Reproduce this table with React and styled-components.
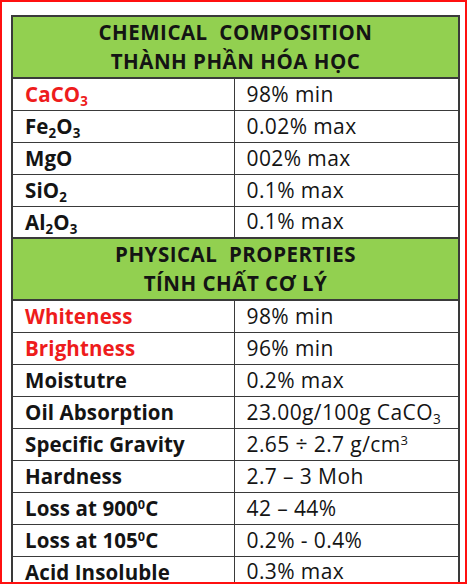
import React from "react";
import styled, { createGlobalStyle } from "styled-components";

const Global = createGlobalStyle`
  html, body { margin: 0; padding: 0; background: #fff; }
  body { font-family: "Open Sans", Lato, sans-serif; }
`;

const Frame = styled.div`
  width: 467px;
  height: 584px;
  box-sizing: border-box;
  border: 2px solid #ff1010;
  padding: 13px 0 0 9px;
  overflow: hidden;
  background: #fff;
`;

const Table = styled.table`
  width: 449px;
  border-collapse: collapse;
  table-layout: fixed;
  border: 2px solid #3a3a3a;
  color: #141414;
`;

const HeadCell = styled.th`
  background: #92d050;
  height: 60px;
  padding: 0;
  font-weight: 700;
  font-size: 20.5px;
  text-align: center;
  line-height: 29px;
  letter-spacing: 0.5px;
  border: 2px solid #3a3a3a;
`;

const Row = styled.tr`
  height: 32px;
`;

const Name = styled.td`
  padding: 0 0 0 12px;
  font-weight: 700;
  font-size: 20.5px;
  letter-spacing: 0.1px;
  color: ${(p) => (p.$red ? "#ee1c1c" : "#141414")};
  border: 1.5px solid #3a3a3a;
  white-space: nowrap;
  line-height: 1;
`;

const Value = styled.td`
  padding: 0 0 0 12px;
  font-weight: 400;
  font-size: 21px;
  letter-spacing: 0.4px;
  border: 1.5px solid #3a3a3a;
  white-space: nowrap;
  line-height: 1;
`;

const Sub = styled.sub`
  font-size: 0.65em;
  vertical-align: -0.3em;
  line-height: 0;
`;

const Sup = styled.sup`
  font-size: 0.62em;
  vertical-align: 0.55em;
  line-height: 0;
`;

const chemical = [
  { name: <>CaCO<Sub>3</Sub></>, value: "98% min", red: true },
  { name: <>Fe<Sub>2</Sub>O<Sub>3</Sub></>, value: "0.02% max" },
  { name: "MgO", value: "002% max" },
  { name: <>SiO<Sub>2</Sub></>, value: "0.1% max" },
  { name: <>Al<Sub>2</Sub>O<Sub>3</Sub></>, value: "0.1% max" },
];

const physical = [
  { name: "Whiteness", value: "98% min", red: true },
  { name: "Brightness", value: "96% min", red: true },
  { name: "Moistutre", value: "0.2% max" },
  { name: "Oil Absorption", value: <>23.00g/100g CaCO<Sub>3</Sub></> },
  { name: "Specific Gravity", value: <>2.65 ÷ 2.7 g/cm<Sup>3</Sup></> },
  { name: "Hardness", value: "2.7 – 3 Moh" },
  { name: <>Loss at 900<Sup>0</Sup>C</>, value: "42 – 44%" },
  { name: <>Loss at 105<Sup>0</Sup>C</>, value: "0.2% - 0.4%" },
  { name: "Acid Insoluble", value: "0.3% max" },
];

const Rows = ({ items }) =>
  items.map((it, i) => (
    <Row key={i}>
      <Name $red={it.red}>{it.name}</Name>
      <Value>{it.value}</Value>
    </Row>
  ));

export default function App() {
  return (
    <>
      <Global />
      <Frame>
        <Table>
          <colgroup>
            <col style={{ width: 222 }} />
            <col />
          </colgroup>
          <tbody>
            <tr>
              <HeadCell colSpan={2}>
                CHEMICAL&nbsp; COMPOSITION
                <br />
                THÀNH PHẦN HÓA HỌC
              </HeadCell>
            </tr>
            <Rows items={chemical} />
            <tr>
              <HeadCell colSpan={2}>
                PHYSICAL&nbsp; PROPERTIES
                <br />
                TÍNH CHẤT CƠ LÝ
              </HeadCell>
            </tr>
            <Rows items={physical} />
          </tbody>
        </Table>
      </Frame>
    </>
  );
}
